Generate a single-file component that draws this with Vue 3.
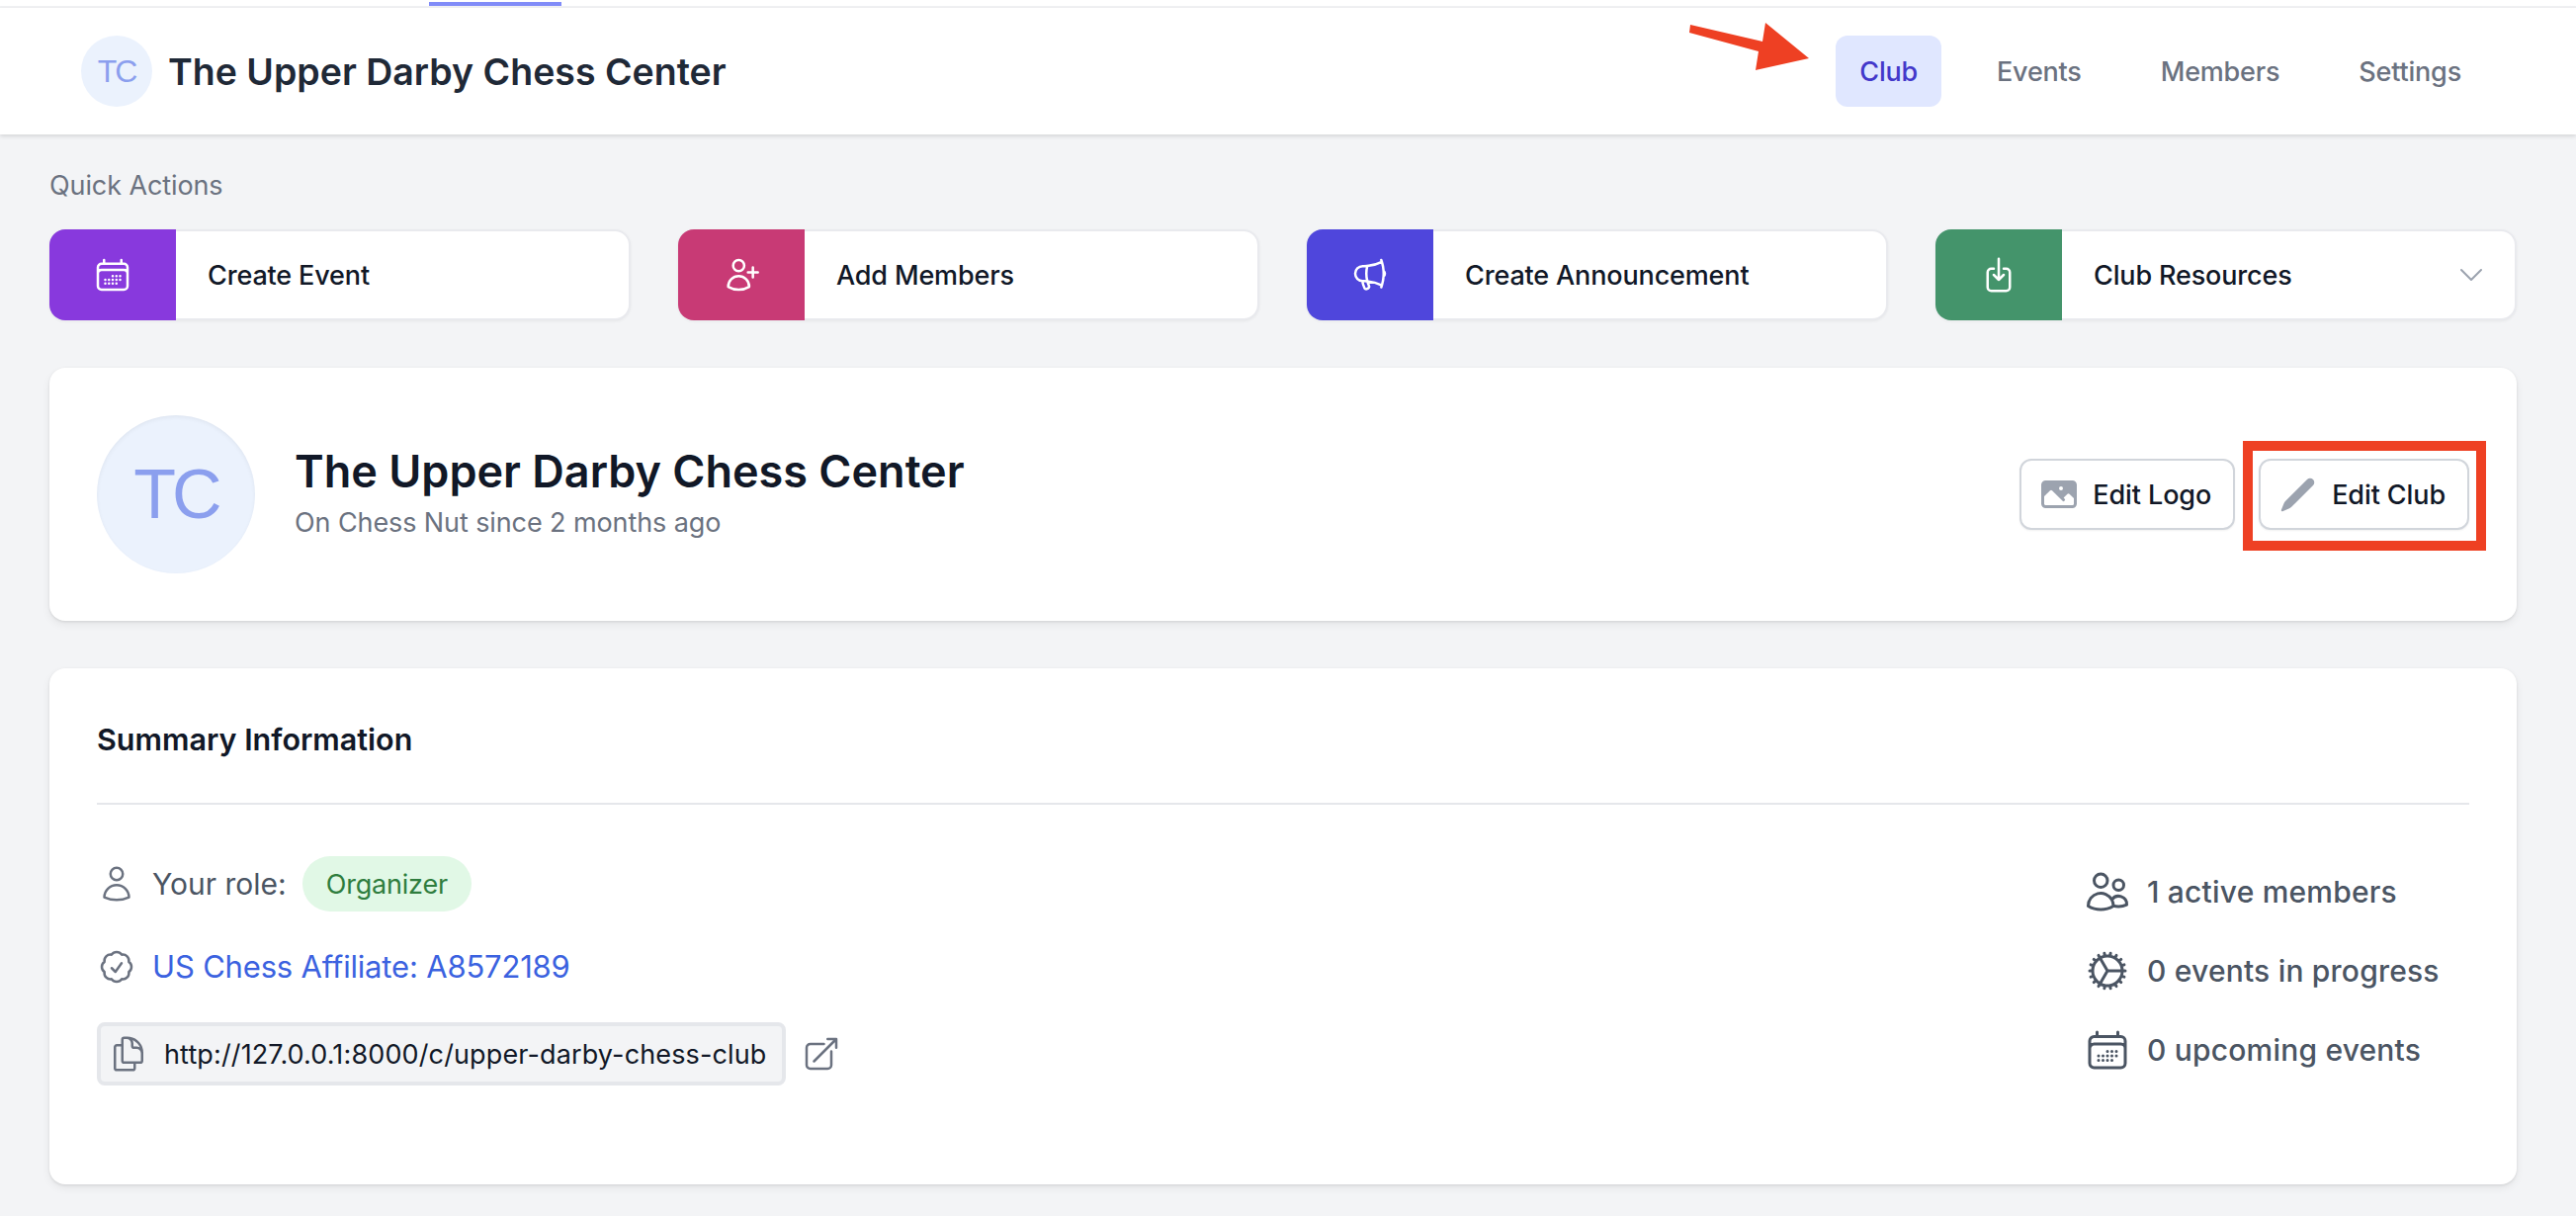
<script setup>
const tabs = [
  { label: 'Club', active: true },
  { label: 'Events' },
  { label: 'Members' },
  { label: 'Settings' }
]

const calendarPath = 'M6.75 3v2.25M17.25 3v2.25M3 18.75V7.5a2.25 2.25 0 012.25-2.25h13.5A2.25 2.25 0 0121 7.5v11.25m-18 0A2.25 2.25 0 005.25 21h13.5A2.25 2.25 0 0021 18.75m-18 0v-7.5A2.25 2.25 0 015.25 9h13.5A2.25 2.25 0 0121 11.25v7.5m-9-6h.008v.008H12v-.008zM12 15h.008v.008H12V15zm0 2.25h.008v.008H12v-.008zM9.75 15h.008v.008H9.75V15zm0 2.25h.008v.008H9.75v-.008zM7.5 15h.008v.008H7.5V15zm0 2.25h.008v.008H7.5v-.008zm6.75-4.5h.008v.008h-.008v-.008zm0 2.25h.008v.008h-.008V15zm0 2.25h.008v.008h-.008v-.008zm2.25-4.5h.008v.008H16.5v-.008zm0 2.25h.008v.008H16.5V15z'

const actions = [
  { label: 'Create Event', color: '#8839dd', path: calendarPath },
  { label: 'Add Members', color: '#c83a75', path: 'M19 7.5v3m0 0v3m0-3h3m-3 0h-3m-2.25-4.125a3.375 3.375 0 11-6.75 0 3.375 3.375 0 016.75 0zM4 19.235v-.11a6.375 6.375 0 0112.75 0v.109A12.318 12.318 0 0110.374 21c-2.331 0-4.512-.645-6.374-1.766z' },
  { label: 'Create Announcement', color: '#4f46dc', path: 'M10.34 15.84c-.688-.06-1.386-.09-2.09-.09H7.5a4.5 4.5 0 110-9h.75c.704 0 1.402-.03 2.09-.09m0 9.18c.253.962.584 1.892.985 2.783.247.55.06 1.21-.463 1.511l-.657.38c-.551.318-1.26.117-1.527-.461a20.845 20.845 0 01-1.44-4.282m3.102.069a18.03 18.03 0 01-.59-4.59c0-1.586.205-3.124.59-4.59m0 9.18a23.848 23.848 0 018.835 2.535M10.34 6.66a23.847 23.847 0 008.835-2.535m0 0A23.74 23.74 0 0018.795 3m.38 1.125a23.91 23.91 0 011.014 5.395m-1.014 8.855c-.118.38-.245.754-.38 1.125m.38-1.125a23.91 23.91 0 001.014-5.395m0-3.46c.495.413.811 1.035.811 1.73 0 .695-.316 1.317-.811 1.73m0-3.46a24.347 24.347 0 010 3.46' },
  { label: 'Club Resources', color: '#44946b', path: 'M9 8.25H7.5a2.25 2.25 0 00-2.25 2.25v9a2.25 2.25 0 002.25 2.25h9a2.25 2.25 0 002.25-2.25v-9a2.25 2.25 0 00-2.25-2.25H15M9 12l3 3m0 0l3-3m-3 3V2.25', dropdown: true }
]

const stats = [
  { label: '1 active members', path: 'M15 19.128a9.38 9.38 0 002.625.372 9.337 9.337 0 004.121-.952 4.125 4.125 0 00-7.533-2.493M15 19.128v-.003c0-1.113-.285-2.16-.786-3.07M15 19.128v.106A12.318 12.318 0 018.624 21c-2.331 0-4.512-.645-6.374-1.766l-.001-.109a6.375 6.375 0 0111.964-3.07M12 6.375a3.375 3.375 0 11-6.75 0 3.375 3.375 0 016.75 0zm8.25 2.25a2.625 2.625 0 11-5.25 0 2.625 2.625 0 015.25 0z' },
  { label: '0 events in progress', path: 'M4.5 12a7.5 7.5 0 0015 0m-15 0a7.5 7.5 0 1115 0m-15 0H3m16.5 0H21m-1.5 0H12m-8.457 3.077l1.41-.513m14.095-5.13l1.41-.513M5.106 17.785l1.15-.964m11.49-9.642l1.149-.964M7.501 19.795l.75-1.3m7.5-12.99l.75-1.3m-6.063 16.658l.26-1.477m2.605-14.772l.26-1.477m0 17.726l-.26-1.477M10.698 4.614l-.26-1.477M16.5 19.794l-.75-1.299M7.5 4.205L12 12m6.894 5.785l-1.149-.964M6.256 7.178l-1.15-.964m15.352 8.864l-1.41-.513M4.954 9.435l-1.41-.514M12.002 12l-3.75 6.495' },
  { label: '0 upcoming events', path: calendarPath }
]
</script>

<template>
  <div class="page">
    <div class="top-strip"><div class="top-indicator"></div></div>

    <header class="club-nav">
      <div class="brand">
        <div class="avatar avatar-small">TC</div>
        <span class="brand-name">The Upper Darby Chess Center</span>
      </div>
      <nav class="tabs">
        <a v-for="tab in tabs" :key="tab.label" class="tab" :class="{ active: tab.active }">{{ tab.label }}</a>
      </nav>
    </header>

    <main class="content">
      <section>
        <div class="section-label">Quick Actions</div>
        <div class="actions">
          <div v-for="action in actions" :key="action.label" class="action">
            <div class="action-icon" :style="{ backgroundColor: action.color }">
              <svg class="icon" viewBox="0 0 24 24" fill="none" stroke="#fff" stroke-width="1.5" stroke-linecap="round" stroke-linejoin="round">
                <path :d="action.path" />
              </svg>
            </div>
            <span class="action-label">{{ action.label }}</span>
            <svg v-if="action.dropdown" class="chevron" viewBox="0 0 24 24" fill="none" stroke="#9ca3af" stroke-width="1.5" stroke-linecap="round" stroke-linejoin="round">
              <path d="M19.5 8.25l-7.5 7.5-7.5-7.5" />
            </svg>
          </div>
        </div>
      </section>

      <section class="card hero">
        <div class="hero-left">
          <div class="avatar avatar-large">TC</div>
          <div class="hero-text">
            <h1 class="hero-title">The Upper Darby Chess Center</h1>
            <p class="hero-sub">On Chess Nut since 2 months ago</p>
          </div>
        </div>
        <div class="hero-buttons">
          <button class="edit-button">
            <svg class="icon" viewBox="0 0 20 20" fill="#9ca3af">
              <path fill-rule="evenodd" clip-rule="evenodd" d="M1 5.25A2.25 2.25 0 013.25 3h13.5A2.25 2.25 0 0119 5.25v9.5A2.25 2.25 0 0116.75 17H3.25A2.25 2.25 0 011 14.75v-9.5zm1.5 5.81v3.69c0 .414.336.75.75.75h13.5a.75.75 0 00.75-.75v-2.69l-2.22-2.219a.75.75 0 00-1.06 0l-1.91 1.909.47.47a.75.75 0 11-1.06 1.06L6.53 8.091a.75.75 0 00-1.06 0l-2.97 2.97zM12 7a1 1 0 11-2 0 1 1 0 012 0z" />
            </svg>
            Edit Logo
          </button>
          <button class="edit-button">
            <svg class="icon" viewBox="0 0 20 20" fill="#9ca3af">
              <path d="M2.695 14.763l-1.262 3.154a.5.5 0 00.65.65l3.155-1.262a4 4 0 001.343-.885L17.5 5.5a2.121 2.121 0 00-3-3L3.58 13.42a4 4 0 00-.885 1.343z" />
            </svg>
            Edit Club
          </button>
        </div>
        <div class="callout-box"></div>
      </section>

      <section class="card summary">
        <h2 class="summary-title">Summary Information</h2>
        <div class="summary-body">
          <div class="summary-left">
            <div class="info-row">
              <svg class="icon" viewBox="0 0 24 24" fill="none" stroke="#6b7280" stroke-width="1.5" stroke-linecap="round" stroke-linejoin="round">
                <path d="M15.75 6a3.75 3.75 0 11-7.5 0 3.75 3.75 0 017.5 0zM4.501 20.118a7.5 7.5 0 0114.998 0A17.933 17.933 0 0112 21.75c-2.676 0-5.216-.584-7.499-1.632z" />
              </svg>
              <span class="role-text">Your role:</span>
              <span class="role-badge">Organizer</span>
            </div>
            <div class="info-row">
              <svg class="icon" viewBox="0 0 24 24" fill="none" stroke="#6b7280" stroke-width="1.5" stroke-linecap="round" stroke-linejoin="round">
                <path d="M9 12.75L11.25 15 15 9.75M21 12c0 1.268-.63 2.39-1.593 3.068a3.745 3.745 0 01-1.043 3.296 3.745 3.745 0 01-3.296 1.043A3.745 3.745 0 0112 21c-1.268 0-2.39-.63-3.068-1.593a3.746 3.746 0 01-3.296-1.043 3.745 3.745 0 01-1.043-3.296A3.745 3.745 0 013 12c0-1.268.63-2.39 1.593-3.068a3.745 3.745 0 011.043-3.296 3.746 3.746 0 013.296-1.043A3.746 3.746 0 0112 3c1.268 0 2.39.63 3.068 1.593a3.746 3.746 0 013.296 1.043 3.746 3.746 0 011.043 3.296A3.745 3.745 0 0121 12z" />
              </svg>
              <a class="affiliate">US Chess Affiliate: A8572189</a>
            </div>
            <div class="link-row">
              <div class="link-box">
                <svg class="icon" viewBox="0 0 24 24" fill="none" stroke="#6b7280" stroke-width="1.5" stroke-linecap="round" stroke-linejoin="round">
                  <path d="M15.75 17.25v3.375c0 .621-.504 1.125-1.125 1.125h-9.75a1.125 1.125 0 01-1.125-1.125V7.875c0-.621.504-1.125 1.125-1.125H6.75a9.06 9.06 0 011.5.124m7.5 10.376h3.375c.621 0 1.125-.504 1.125-1.125V11.25c0-4.46-3.243-8.161-7.5-8.876a9.06 9.06 0 00-1.5-.124H9.375c-.621 0-1.125.504-1.125 1.125v3.5m7.5 10.375H9.375a1.125 1.125 0 01-1.125-1.125v-9.25m12 6.625v-1.875a3.375 3.375 0 00-3.375-3.375h-1.5a1.125 1.125 0 01-1.125-1.125v-1.5a3.375 3.375 0 00-3.375-3.375H9.75" />
                </svg>
                <span class="link-text">http://127.0.0.1:8000/c/upper-darby-chess-club</span>
              </div>
              <svg class="icon" viewBox="0 0 24 24" fill="none" stroke="#6b7280" stroke-width="1.5" stroke-linecap="round" stroke-linejoin="round">
                <path d="M13.5 6H5.25A2.25 2.25 0 003 8.25v10.5A2.25 2.25 0 005.25 21h10.5A2.25 2.25 0 0018 18.75V10.5m-10.5 6L21 3m0 0h-5.25M21 3v5.25" />
              </svg>
            </div>
          </div>
          <div class="summary-right">
            <div v-for="stat in stats" :key="stat.label" class="stat">
              <svg class="stat-icon" viewBox="0 0 24 24" fill="none" stroke="#4b5563" stroke-width="1.5" stroke-linecap="round" stroke-linejoin="round">
                <path :d="stat.path" />
              </svg>
              <span>{{ stat.label }}</span>
            </div>
          </div>
        </div>
      </section>
    </main>

    <!-- annotation arrow drawn over the screenshot -->
    <svg class="callout-arrow" viewBox="0 0 125 52">
      <path d="M4 5L3 13L73 32L70 51L124 39L80 3L77 22Z" fill="#ee4023" />
    </svg>
  </div>
</template>

<style>
html, body {
  margin: 0;
  background: #f3f4f6;
}
</style>

<style scoped>
.page {
  position: relative;
  min-height: 1230px;
  box-sizing: border-box;
  background: #f3f4f6;
  font-family: Inter, "Liberation Sans", sans-serif;
  color: #111827;
}

.top-strip {
  height: 6px;
  background: #fff;
  border-bottom: 2px solid #f0f1f3;
}

.top-indicator {
  width: 134px;
  height: 4px;
  margin-left: 434px;
  position: relative;
  top: 2px;
  background: #818cf8;
}

.club-nav {
  height: 128px;
  box-sizing: border-box;
  padding: 0 92px 0 82px;
  display: flex;
  align-items: center;
  justify-content: space-between;
  background: #fff;
  box-shadow: 0 2px 4px rgba(0, 0, 0, 0.12);
}

.brand {
  display: flex;
  align-items: center;
  gap: 16px;
}

.avatar {
  display: flex;
  align-items: center;
  justify-content: center;
  border-radius: 50%;
  background: #ebf2fd;
  color: #8b9fee;
  font-family: "Liberation Sans", sans-serif;
  flex-shrink: 0;
}

.avatar-small {
  width: 72px;
  height: 72px;
  font-size: 32px;
  letter-spacing: -2px;
}

.avatar-large {
  width: 160px;
  height: 160px;
  font-size: 70px;
  letter-spacing: -4px;
  box-shadow: inset 0 2px 4px rgba(0, 0, 0, 0.05);
}

.brand-name {
  font-size: 37.5px;
  font-weight: 600;
  color: #1f2937;
}

.tabs {
  display: flex;
  gap: 32px;
}

.tab {
  width: fit-content;
  height: 72px;
  padding: 0 24px;
  display: flex;
  align-items: center;
  border-radius: 12px;
  font-size: 27px;
  font-weight: 500;
  letter-spacing: -0.2px;
  color: #6b7280;
}

.tab.active {
  background: #e0e7ff;
  color: #4338ca;
}

.content {
  padding: 32px 60px 0 50px;
  display: flex;
  flex-direction: column;
  gap: 48px;
}

.section-label {
  font-size: 27px;
  line-height: 40px;
  letter-spacing: -0.1px;
  color: #6b7280;
  margin-bottom: 24px;
}

.actions {
  display: grid;
  grid-template-columns: repeat(4, 1fr);
  gap: 48px;
}

.action {
  height: 92px;
  box-sizing: border-box;
  display: flex;
  align-items: center;
  background: #fff;
  border: 2px solid #e9eaee;
  border-radius: 16px;
  box-shadow: 0 1px 3px rgba(0, 0, 0, 0.06);
}

.action-icon {
  width: 128px;
  height: 92px;
  margin: -2px 0 -2px -2px;
  display: flex;
  align-items: center;
  justify-content: center;
  border-radius: 16px 0 0 16px;
  flex-shrink: 0;
}

.icon {
  width: 40px;
  height: 40px;
  flex-shrink: 0;
}

.action-label {
  margin-left: 32px;
  font-size: 27px;
  font-weight: 500;
  letter-spacing: -0.15px;
  color: #111827;
}

.chevron {
  width: 32px;
  height: 32px;
  margin-left: auto;
  margin-right: 28px;
}

.card {
  background: #fff;
  border-radius: 16px;
  box-shadow: 0 4px 8px rgba(0, 0, 0, 0.06), 0 1px 3px rgba(0, 0, 0, 0.1);
}

.hero {
  position: relative;
  height: 256px;
  box-sizing: border-box;
  padding: 0 48px;
  display: flex;
  align-items: center;
  justify-content: space-between;
}

.hero-left {
  display: flex;
  align-items: center;
  gap: 40px;
}

.hero-text {
  padding-bottom: 6px;
}

.hero-title {
  margin: 0;
  font-size: 45px;
  line-height: 64px;
  font-weight: 600;
  color: #111827;
}

.hero-sub {
  margin: 0;
  font-size: 27px;
  line-height: 40px;
  letter-spacing: -0.1px;
  color: #6b7280;
}

.hero-buttons {
  display: flex;
  gap: 24px;
}

.edit-button {
  height: 72px;
  box-sizing: border-box;
  padding: 0 22px 0 18px;
  display: flex;
  align-items: center;
  gap: 14px;
  background: #fff;
  border: 2px solid #d1d5db;
  border-radius: 12px;
  box-shadow: 0 1px 2px rgba(0, 0, 0, 0.06);
  font-family: inherit;
  font-size: 27px;
  font-weight: 500;
  letter-spacing: -0.1px;
  color: #111827;
}

.callout-box {
  position: absolute;
  left: 2219px;
  top: 74px;
  width: 246px;
  height: 111px;
  box-sizing: border-box;
  border: 10px solid #ee4023;
}

.summary {
  height: 522px;
  box-sizing: border-box;
  padding: 48px;
}

.summary-title {
  margin: 0;
  padding-bottom: 40px;
  border-bottom: 2px solid #e5e7eb;
  font-size: 30.5px;
  line-height: 48px;
  font-weight: 600;
  color: #111827;
}

.summary-body {
  margin-top: 52px;
  display: flex;
  justify-content: space-between;
}

.summary-left {
  display: flex;
  flex-direction: column;
  gap: 32px;
}

.info-row {
  min-height: 48px;
  display: flex;
  align-items: center;
  gap: 16px;
}

.role-text {
  font-size: 30px;
  color: #4b5563;
}

.role-badge {
  height: 56px;
  padding: 0 24px;
  display: flex;
  align-items: center;
  border-radius: 28px;
  background: #e1f8e6;
  font-size: 27px;
  letter-spacing: -0.2px;
  color: #2f7d3e;
}

.affiliate {
  font-size: 31px;
  line-height: 48px;
  letter-spacing: -0.18px;
  color: #3b62e0;
}

.link-row {
  display: flex;
  align-items: center;
  gap: 16px;
}

.link-box {
  height: 64px;
  box-sizing: border-box;
  padding: 0 16px 0 8px;
  display: flex;
  align-items: center;
  gap: 16px;
  background: #f3f4f6;
  border: 4px solid #e5e7eb;
  border-radius: 8px;
}

.link-text {
  font-size: 27px;
  letter-spacing: 0.13px;
  color: #111827;
}

.summary-right {
  width: 390px;
  padding-top: 12px;
  display: flex;
  flex-direction: column;
  gap: 32px;
}

.stat {
  height: 48px;
  display: flex;
  align-items: center;
  gap: 16px;
  font-size: 30px;
  font-weight: 500;
  letter-spacing: 0.2px;
  color: #4b5563;
  white-space: nowrap;
}

.stat-icon {
  width: 48px;
  height: 48px;
  flex-shrink: 0;
}

.callout-arrow {
  position: absolute;
  left: 1706px;
  top: 20px;
  width: 125px;
  height: 52px;
}
</style>
